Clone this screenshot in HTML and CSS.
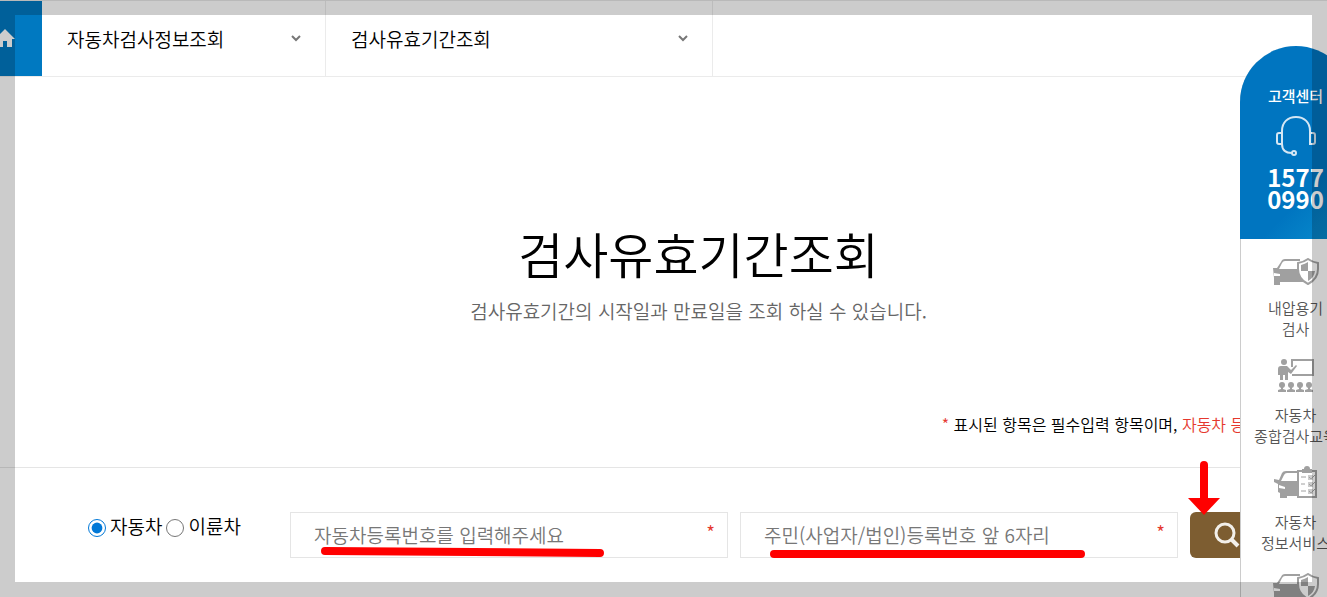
FILE: index.html
```html
<!DOCTYPE html>
<html lang="ko">

<head>
    <meta charset="UTF-8">
    <meta name="viewport" content="width=device-width, initial-scale=1.0">
    <title>검사유효기간조회</title>
    <link rel="stylesheet" href="styles.css">
</head>

<body>
    <!-- icons shared by the quick menu -->
    <svg class="symbols" aria-hidden="true">
        <symbol id="car-shield" viewBox="0 0 46 27">
            <path d="M0 10h4l4-6q1-3 4-3h15v2H12q-2 0-3 2l-3 6h19q1 8 6 12v1H7v3H1v-7z" fill="#a0a0a0" />
            <path d="M1 15l6 1v2H1z" fill="#fff" />
            <path d="M35 1q4 3 10 4v6q0 10-10 15-10-5-10-15V5q6-1 10-4z" fill="#fff" stroke="#a0a0a0" stroke-width="2" />
            <path d="M35 4v9h-7V7q4-1 7-3zM35 13h7q-1 7-7 10z" fill="#a0a0a0" />
        </symbol>
    </svg>

    <div class="page">
        <nav class="location">
            <a href="#" class="home" aria-label="홈">
                <svg width="20" height="20" viewBox="0 0 20 20">
                    <path d="M10 1L0 11h3v8h5v-6h4v6h5v-8h3z" fill="#fff" />
                </svg>
            </a>
            <button type="button" class="crumb crumb-first">
                자동차검사정보조회
                <svg width="10" height="7" viewBox="0 0 10 7">
                    <path d="M1 1l4 4 4-4" fill="none" stroke="#777" stroke-width="2" />
                </svg>
            </button>
            <button type="button" class="crumb crumb-second">
                검사유효기간조회
                <svg width="10" height="7" viewBox="0 0 10 7">
                    <path d="M1 1l4 4 4-4" fill="none" stroke="#777" stroke-width="2" />
                </svg>
            </button>
        </nav>

        <main>
            <header class="title">
                <h1>검사유효기간조회</h1>
                <p>검사유효기간의 시작일과 만료일을 조회 하실 수 있습니다.</p>
            </header>

            <p class="note"><span class="star">*</span> 표시된 항목은 필수입력 항목이며, <span class="warn">자동차 등록</span></p>

            <form class="search">
                <div class="kinds">
                    <input type="radio" name="kind" id="kind-car" checked>
                    <label for="kind-car">자동차</label>
                    <input type="radio" name="kind" id="kind-bike">
                    <label for="kind-bike">이륜차</label>
                </div>
                <div class="field">
                    <input type="text" aria-label="자동차등록번호" placeholder="자동차등록번호를 입력해주세요">
                    <span class="star">*</span>
                    <svg class="underline" width="284" height="12" viewBox="0 0 284 12">
                        <path d="M5 5l275 2" stroke="#f00" stroke-width="8" stroke-linecap="round" />
                    </svg>
                </div>
                <div class="field">
                    <input type="text" aria-label="주민(사업자/법인)등록번호" placeholder="주민(사업자/법인)등록번호 앞 6자리">
                    <span class="star">*</span>
                    <svg class="underline" width="316" height="12" viewBox="0 0 316 12">
                        <path d="M4 8h307" stroke="#f00" stroke-width="8" stroke-linecap="round" />
                    </svg>
                </div>
                <div class="submit">
                    <button type="submit" aria-label="조회">
                        <svg width="26" height="26" viewBox="0 0 26 26" fill="none" stroke="#f2efe9">
                            <circle cx="11" cy="11" r="9" stroke-width="3" />
                            <path d="M17 17l7 7" stroke-width="4" />
                        </svg>
                    </button>
                    <svg class="arrow" width="32" height="54" viewBox="0 0 32 54">
                        <path d="M16 4v36" stroke="#f00" stroke-width="8" stroke-linecap="round" />
                        <path d="M0 37h32L16 54z" fill="#f00" />
                    </svg>
                </div>
            </form>
        </main>

        <aside class="quick">
            <div class="center">
                <span class="center-name">고객센터</span>
                <svg width="40" height="40" viewBox="0 0 40 40" fill="none" stroke="#d5e7f4" stroke-width="2">
                    <path d="M6 17v-2C6 6 12 1 20 1s14 5 14 14v2" />
                    <path d="M6 17H3q-2 0-2 2v7q0 2 2 2h3zM34 17h3q2 0 2 2v7q0 2-2 2h-3z" />
                    <path d="M6 28c0 6 4 9 10 9" />
                    <circle cx="18" cy="37" r="2" />
                </svg>
                <strong>1577<br>0990</strong>
            </div>
            <a href="#" class="quick-item">
                <svg width="46" height="27"><use href="#car-shield" /></svg>
                <span>내압용기<br>검사</span>
            </a>
            <a href="#" class="quick-item">
                <svg width="36" height="33" viewBox="0 0 36 33" fill="#a0a0a0">
                    <circle cx="6" cy="3" r="3" />
                    <path d="M0 10q0-3 3-3h6l4 4 5-5 1 1-6 8-3-2v8H7v-5H5v5H2v-5H0z" />
                    <path d="M14 8V1h21v15H14" fill="none" stroke="#a0a0a0" stroke-width="2" />
                    <circle cx="4" cy="26" r="3" />
                    <circle cx="13" cy="26" r="3" />
                    <circle cx="22" cy="26" r="3" />
                    <circle cx="31" cy="26" r="3" />
                    <path d="M0 33v-2l3-1v-2h2v2l3 1v2zM9 33v-2l3-1v-2h2v2l3 1v2zM18 33v-2l3-1v-2h2v2l3 1v2zM27 33v-2l3-1v-2h2v2l3 1v2z" />
                </svg>
                <span>자동차<br>종합검사교육</span>
            </a>
            <a href="#" class="quick-item">
                <svg width="44" height="33" viewBox="0 0 44 33" fill="#a0a0a0">
                    <path d="M0 13l5 1 3-7q1-2 4-2h12v2H13q-2 0-3 2l-3 6h17v15H13v2H6v-5l-2-1v-8l-4-2z" />
                    <path d="M5 19l6 2v2l-6-1z" fill="#fff" />
                    <path d="M24 5h18v26H24z" fill="#fff" stroke="#a0a0a0" stroke-width="2" />
                    <path d="M28 3h2q0-3 3-3t3 3h2v4H28z" />
                    <path d="M27 11h5M27 18h4M27 25h5" fill="none" stroke="#a0a0a0" stroke-width="1" />
                    <path d="M34 9h5v5h-5zM34 16h5v5h-5zM34 23h5v5h-5z" fill="#ccc" />
                    <path d="M35 11l2 2 4-4M35 18l2 2 4-4M35 25l2 2 4-4" fill="none" stroke="#a0a0a0" stroke-width="1" />
                </svg>
                <span>자동차<br>정보서비스</span>
            </a>
            <a href="#" class="quick-item" aria-label="내압용기 검사">
                <svg width="46" height="27"><use href="#car-shield" /></svg>
            </a>
        </aside>

        <div class="frame"></div>
    </div>
</body>

</html>
```
FILE: styles.css
```css
* {
    box-sizing: border-box;
}

body {
    margin: 0;
    font-family: "Noto Sans CJK KR", "Noto Sans KR", sans-serif;
    font-size: 19px;
    font-weight: 350;
    line-height: 28px;
    color: #000;
    background: #fff;
}

h1,
p {
    margin: 0;
}

button,
input {
    font: inherit;
}

a {
    text-decoration: none;
}

svg {
    display: block;
    flex-shrink: 0;
}

.symbols {
    position: absolute;
    width: 0;
    height: 0;
}

.page {
    position: relative;
    height: 100vh;
    overflow: hidden;
}

/* location bar */
.location {
    display: flex;
    height: 77px;
    border-top: 1px solid #e8e8e8;
    border-bottom: 1px solid #ebebeb;
}

.home {
    display: flex;
    align-items: center;
    justify-content: flex-end;
    width: 42px;
    padding: 0 27px 2px 0;
    background: #0079c1;
}

.crumb {
    display: flex;
    align-items: center;
    justify-content: space-between;
    padding: 0 24px 0 25px;
    border: 0;
    border-right: 1px solid #ebebeb;
    background: none;
    color: #000;
}

.crumb-first {
    width: 284px;
}

.crumb-second {
    width: 387px;
}

/* title */
.title {
    padding: 140px 0 0 70px;
    text-align: center;
}

.title h1 {
    font-size: 49px;
    font-weight: 350;
    line-height: 72px;
}

.title p {
    margin-top: 8px;
    color: #666;
}

.note {
    padding: 85px 67px 29px 0;
    font-size: 16px;
    text-align: right;
    white-space: nowrap;
}

.star,
.warn {
    color: #e5382e;
}

/* search form */
.search {
    display: flex;
    gap: 12px;
    padding: 44px 63px 44px 88px;
    border-top: 1px solid #e5e5e5;
}

.kinds {
    display: flex;
    align-items: center;
    width: 190px;
    padding-bottom: 18px;
}

.kinds input {
    width: 18px;
    height: 18px;
    margin: 3px 0 0;
    accent-color: #0078d7;
}

.kinds label {
    padding: 0 4px;
}

.field {
    position: relative;
    flex: 1;
}

.field input {
    width: 100%;
    height: 46px;
    padding: 0 40px 2px 23px;
    border: 1px solid #e5e5e5;
    outline: 0;
}

.field input::placeholder {
    color: #777;
}

.field .star {
    position: absolute;
    top: 6px;
    right: 13px;
}

.underline {
    position: absolute;
    top: 34px;
    left: 30px;
}

.submit {
    position: relative;
}

.submit button {
    display: flex;
    align-items: center;
    justify-content: center;
    width: 74px;
    height: 46px;
    padding: 0;
    border: 0;
    border-radius: 6px;
    background: #7d5d31;
}

.arrow {
    position: absolute;
    top: -51px;
    left: -2px;
}

/* quick menu, runs off the right edge */
.quick {
    position: absolute;
    top: 46px;
    right: -25px;
    width: 112px;
    text-align: center;
    font-size: 15px;
    line-height: 21px;
    background: #fff;
    border-left: 1px solid #ccc;
    border-radius: 56px 56px 0 0;
}

.center {
    display: flex;
    flex-direction: column;
    align-items: center;
    height: 193px;
    margin-left: -1px;
    padding: 39px 1px 0 0;
    border-radius: 56px 56px 0 0;
    background: linear-gradient(135deg, #0075c0 70%, #0a90d0);
    color: #fff;
}

.center-name {
    font-weight: 500;
}

.center svg {
    margin: 10px 0 10px;
}

.center strong {
    font-size: 24px;
    line-height: 22px;
}

.quick-item {
    display: flex;
    flex-direction: column;
    align-items: center;
    gap: 12px;
    padding: 19px 2px 0 0;
    color: #555;
    white-space: nowrap;
}

.quick-item + .quick-item {
    padding-top: 20px;
}

/* translucent frame around the whole view */
.frame {
    position: absolute;
    inset: 0;
    border: 15px solid rgba(0, 0, 0, 0.2);
    pointer-events: none;
}
```
